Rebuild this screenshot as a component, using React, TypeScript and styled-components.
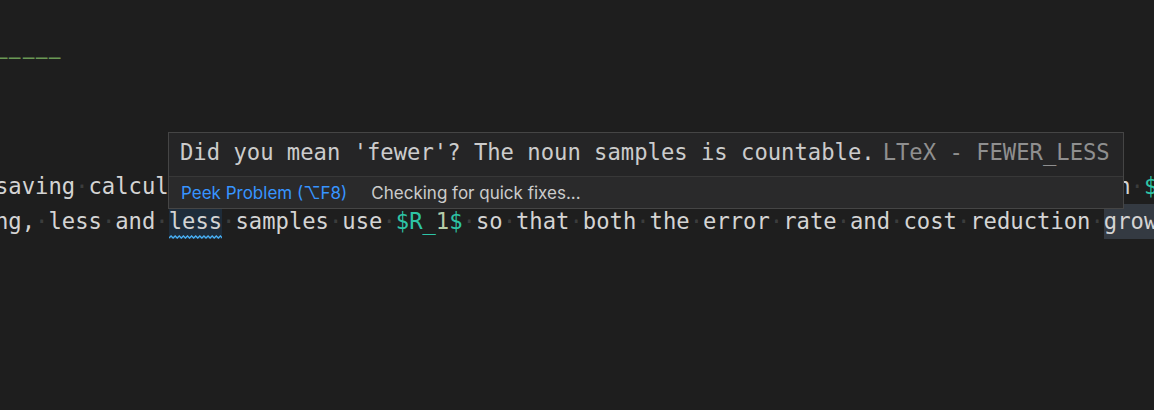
import React from "react";
import styled, { createGlobalStyle } from "styled-components";

const GlobalStyle = createGlobalStyle`
  html, body { margin: 0; padding: 0; background: #1e1e1e; }
  body { overflow: hidden; }
`;

const Editor = styled.div`
  position: relative;
  width: 1154px;
  height: 410px;
  overflow: hidden;
  background: #1e1e1e;
  font-family: "DejaVu Sans Mono", monospace;
  font-size: 22.2px;
  color: #d4d4d4;
`;

const Lines = styled.div`
  padding-top: 4.5px;
  margin-left: -5px;
`;

const Line = styled.div`
  height: 35px;
  line-height: 35px;
  white-space: pre;
`;

const Spacer = styled.div`
  height: 94.5px;
`;

const Ws = styled.span`
  color: rgba(227, 228, 226, 0.17);
`;

const Comment = styled.span`
  color: #6a9955;
`;

const Dash = styled.span`
  display: inline-block;
  transform: scaleX(0.88);
`;

const MathDelim = styled.span`
  color: #2ec4a6;
`;

const Num = styled.span`
  color: #b5cea8;
`;

const Highlight = styled.span<{ $tone: "info" | "sel" }>`
  position: relative;
  display: inline-block;
  height: 35px;
  vertical-align: top;
  background: ${(p) => (p.$tone === "info" ? "#1e2c3a" : "#343a42")};
`;

const Squiggle = styled.svg`
  position: absolute;
  left: 0;
  bottom: 0;
  width: 100%;
  height: 4px;
`;

const Hover = styled.div`
  position: absolute;
  left: 168px;
  top: 132px;
  width: 956px;
  box-sizing: border-box;
  border: 1px solid #454545;
  background: #252526;
  display: flex;
  flex-direction: column;
`;

const HoverBody = styled.div`
  height: 43px;
  line-height: 39px;
  padding: 0 11px;
  white-space: pre;
  color: #cccccc;
`;

const Source = styled.span`
  margin-left: 8px;
  color: #8f8f8f;
`;

const StatusBar = styled.div`
  height: 31px;
  border-top: 1px solid #383838;
  background: #2a2a2b;
  display: flex;
  align-items: center;
  gap: 24px;
  padding: 0 12px;
  font-family: Inter, "Noto Sans", sans-serif;
  font-size: 17px;
`;

const Action = styled.span`
  color: #3794ff;
`;

const Status = styled.span`
  color: #cccccc;
`;

const Text = ({ children }: { children: string }) => (
  <>
    {children.split(/( )/).map((s, i) =>
      s === " " ? <Ws key={i}>·</Ws> : s ? <React.Fragment key={i}>{s}</React.Fragment> : null
    )}
  </>
);

const MathVar = ({ sub }: { sub: string }) => (
  <>
    <MathDelim>$R_</MathDelim>
    <Num>{sub}</Num>
    <MathDelim>$</MathDelim>
  </>
);

const SquiggleLine = () => (
  <Squiggle viewBox="0 0 52 4" preserveAspectRatio="none">
    <path
      d="M0 3 L2 1 L4 3 L6 1 L8 3 L10 1 L12 3 L14 1 L16 3 L18 1 L20 3 L22 1 L24 3 L26 1 L28 3 L30 1 L32 3 L34 1 L36 3 L38 1 L40 3 L42 1 L44 3 L46 1 L48 3 L50 1 L52 3"
      fill="none"
      stroke="#48b0f5"
      strokeWidth="1.3"
    />
  </Squiggle>
);

export default function App() {
  return (
    <>
      <GlobalStyle />
      <Editor>
        <Lines>
          <Line> </Line>
          <Line>
            <Comment>
              {[0, 1, 2, 3, 4].map((i) => (
                <Dash key={i}>—</Dash>
              ))}
            </Comment>
          </Line>
          <Spacer />
          <Line>
            <Text>saving calculations, we compare the sampling strategy within a fixed sample budget on </Text>
            <MathVar sub="0" />
          </Line>
          <Line>
            <Text>ng, less and </Text>
            <Highlight $tone="info">
              less
              <SquiggleLine />
            </Highlight>
            <Text> samples use </Text>
            <MathVar sub="1" />
            <Text> so that both the error rate and cost reduction </Text>
            <Highlight $tone="sel">grow</Highlight>
          </Line>
          <Line> </Line>
          <Line> </Line>
          <Line> </Line>
          <Line> </Line>
        </Lines>
        <Hover>
          <HoverBody>
            Did you mean 'fewer'? The noun samples is countable.
            <Source>LTeX - FEWER_LESS</Source>
          </HoverBody>
          <StatusBar>
            <Action>Peek Problem (⌥F8)</Action>
            <Status>Checking for quick fixes...</Status>
          </StatusBar>
        </Hover>
      </Editor>
    </>
  );
}
